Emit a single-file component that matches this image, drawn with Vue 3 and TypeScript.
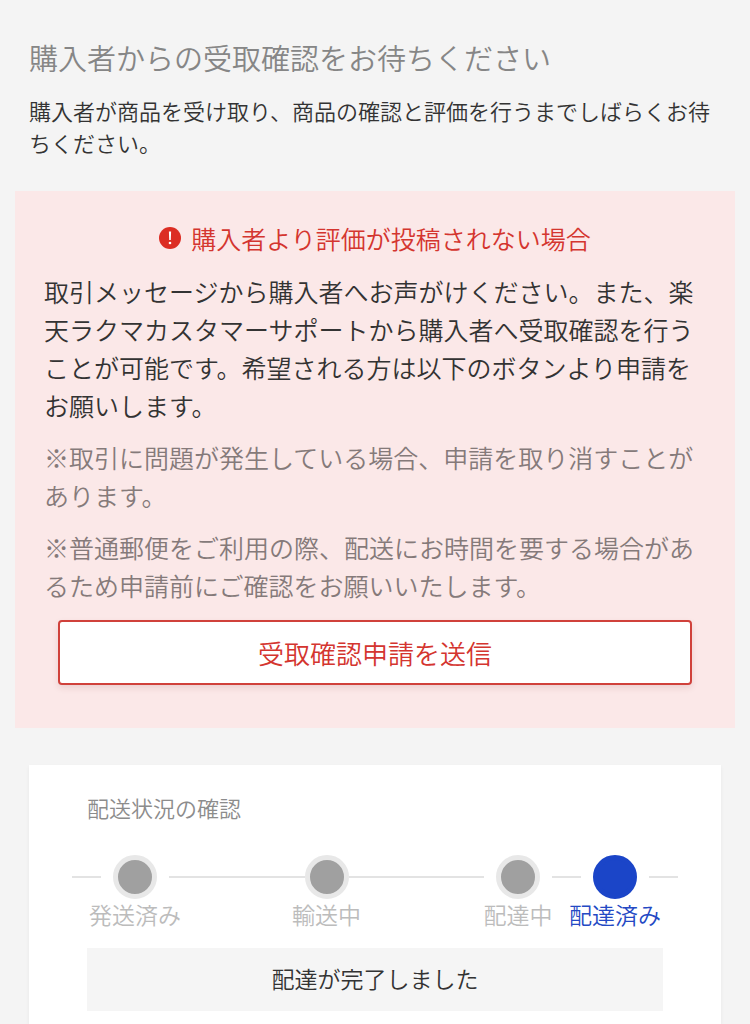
<script setup lang="ts">
interface Step {
  label: string
  state: 'done' | 'current'
}

const notes: string[] = [
  '※取引に問題が発生している場合、申請を取り消すことがあります。',
  '※普通郵便をご利用の際、配送にお時間を要する場合があるため申請前にご確認をお願いいたします。',
]

const steps: Step[] = [
  { label: '発送済み', state: 'done' },
  { label: '輸送中', state: 'done' },
  { label: '配達中', state: 'done' },
  { label: '配達済み', state: 'current' },
]
</script>

<template>
  <main class="page" lang="ja">
    <header class="intro">
      <h1 class="intro-title">購入者からの受取確認をお待ちください</h1>
      <p class="intro-text">購入者が商品を受け取り、商品の確認と評価を行うまでしばらくお待ちください。</p>
    </header>

    <section class="alert">
      <h2 class="alert-title">
        <svg class="alert-icon" viewBox="0 0 22 22" aria-hidden="true">
          <circle cx="11" cy="11" r="11" fill="#dc2d23" />
          <path d="M9.9 4.6h2.2l-.3 8.4h-1.6z" fill="#fff" />
          <circle cx="11" cy="16" r="1.3" fill="#fff" />
        </svg>
        <span>購入者より評価が投稿されない場合</span>
      </h2>
      <p class="alert-text">取引メッセージから購入者へお声がけください。また、楽天ラクマカスタマーサポートから購入者へ受取確認を行うことが可能です。希望される方は以下のボタンより申請をお願いします。</p>
      <p v-for="note in notes" :key="note" class="alert-text note">{{ note }}</p>
      <button type="button" class="send">受取確認申請を送信</button>
    </section>

    <section class="card">
      <h2 class="card-title">配送状況の確認</h2>
      <div class="track">
        <span class="line short gap-after"></span>
        <div class="step" :class="steps[0].state">
          <span class="dot"></span><span class="label">{{ steps[0].label }}</span>
        </div>
        <span class="line gap-before"></span>
        <div class="step" :class="steps[1].state">
          <span class="dot"></span><span class="label">{{ steps[1].label }}</span>
        </div>
        <span class="line gap-after"></span>
        <div class="step" :class="steps[2].state">
          <span class="dot"></span><span class="label">{{ steps[2].label }}</span>
        </div>
        <span class="line short gap-before gap-after"></span>
        <div class="step" :class="steps[3].state">
          <span class="dot"></span><span class="label">{{ steps[3].label }}</span>
        </div>
        <span class="line short gap-before"></span>
      </div>
      <p class="status">配達が完了しました</p>
    </section>
  </main>
</template>

<style>
body {
  background: #f4f4f4;
}
</style>

<style scoped>
.page {
  box-sizing: border-box;
  display: flex;
  flex-direction: column;
  min-height: 100vh;
  padding-top: 38px;
  color: #333;
  font-family: "Noto Sans CJK JP", sans-serif;
  font-weight: 350;
}

h1,
h2,
p {
  margin: 0;
  font-weight: 350;
}

.intro {
  padding: 0 29px;
}

.intro-title {
  color: #868686;
  font-size: 29px;
  line-height: 38px;
}

.intro-text {
  margin: 18px -6px 0 0;
  font-size: 22px;
  line-height: 32px;
}

.alert {
  display: flex;
  flex-direction: column;
  margin: 33px 15px 0;
  padding: 28px 29px 43px;
  background: #fbe8e8;
}

.alert-title {
  display: flex;
  align-items: center;
  justify-content: center;
  gap: 10px;
  margin-bottom: 15px;
  color: #d4352f;
  font-size: 25px;
  line-height: 38px;
}

.alert-icon {
  width: 22px;
  height: 22px;
}

.alert-text {
  font-size: 25px;
  line-height: 38px;
}

.note {
  margin-top: 14px;
  color: #857a7a;
}

.send {
  height: 65px;
  margin: 16px 14px 0;
  padding: 0;
  border: 2px solid #d0413b;
  border-radius: 4px;
  background: #fff;
  box-shadow: 0 3px 6px rgba(120, 40, 40, 0.12);
  color: #d4352f;
  font: inherit;
  font-size: 26px;
}

.card {
  flex: 1;
  margin: 37px 29px 0;
  padding: 26px 58px 13px;
  background: #fff;
  box-shadow: 0 2px 4px rgba(0, 0, 0, 0.05);
}

.card-title {
  color: #8c8c8c;
  font-size: 22px;
  line-height: 32px;
}

.track {
  display: flex;
  align-items: flex-start;
  margin: 32px -15px 0;
}

.line {
  flex: 1;
  height: 2px;
  margin-top: 21px;
  background: #e3e3e3;
}

.short {
  flex: none;
  width: 29px;
}

.gap-before {
  margin-left: 12px;
}

.gap-after {
  margin-right: 12px;
}

.step {
  display: flex;
  flex-direction: column;
  align-items: center;
  width: 44px;
  color: #bcbcbc;
}

.dot {
  box-sizing: border-box;
  width: 44px;
  height: 44px;
  border: 5px solid #e8e8e8;
  border-radius: 50%;
  background: #a0a0a0;
}

.label {
  font-size: 23px;
  line-height: 30px;
  white-space: nowrap;
}

.current {
  color: #2449c4;
}

.current .dot {
  border-color: #1b45c8;
  background: #1b45c8;
}

.status {
  margin-top: 19px;
  background: #f5f5f5;
  font-size: 23px;
  line-height: 61px;
  padding-bottom: 2px;
  text-align: center;
}
</style>
